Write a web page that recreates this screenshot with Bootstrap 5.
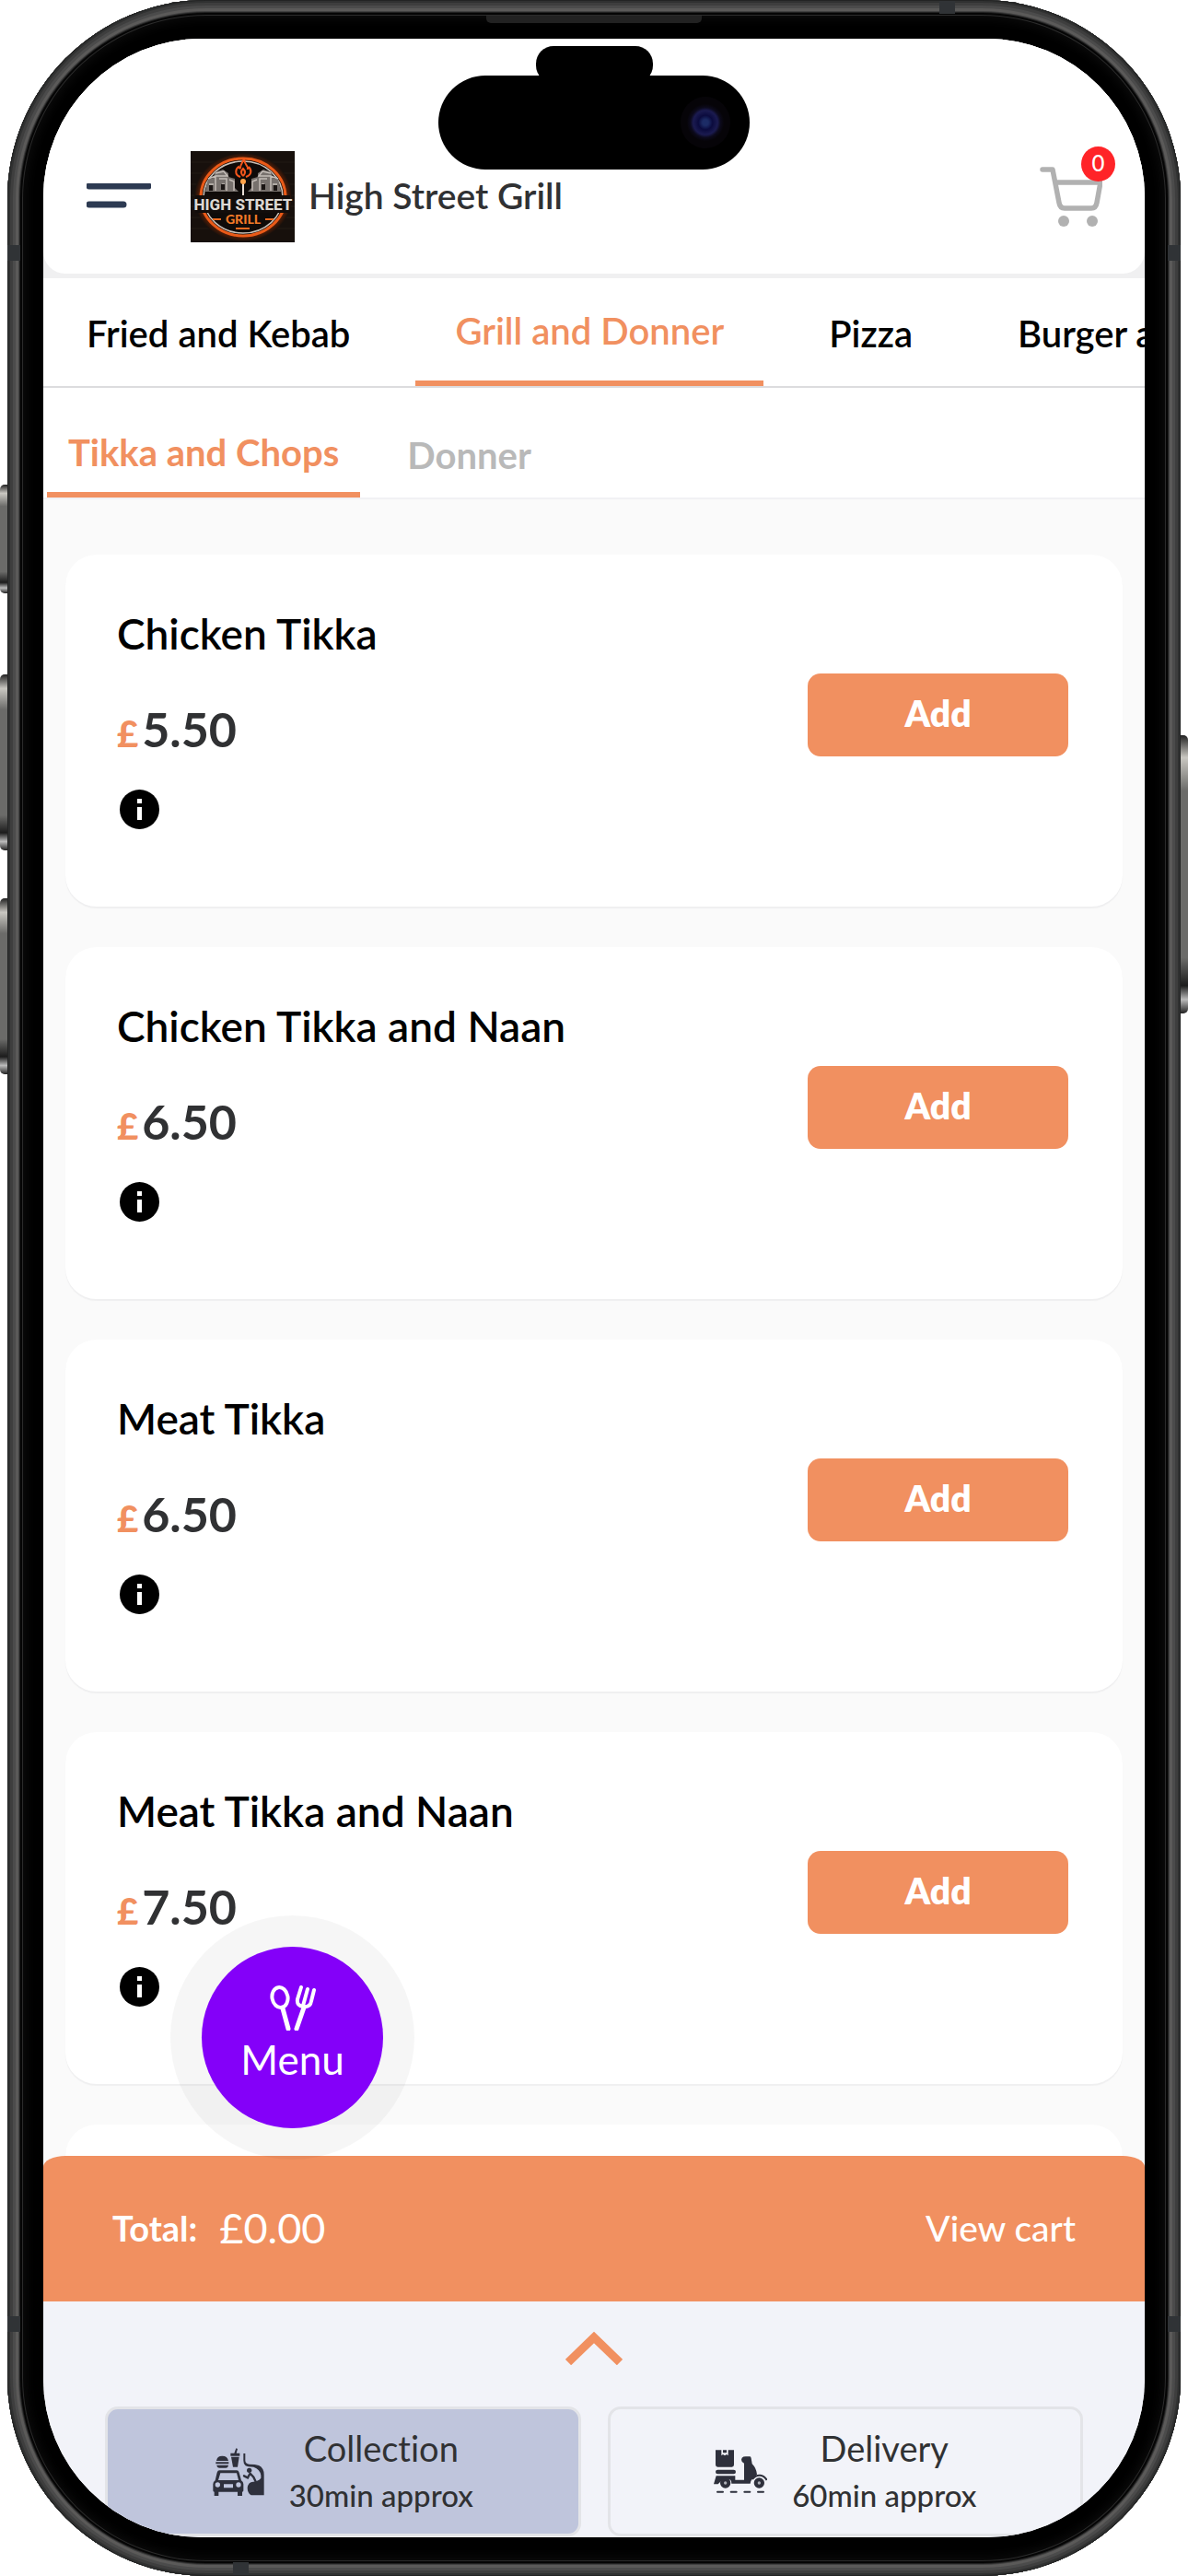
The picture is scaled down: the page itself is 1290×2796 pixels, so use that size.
<!DOCTYPE html>
<html lang="en">
<head>
<meta charset="utf-8">
<meta name="viewport" content="width=device-width, initial-scale=1">
<title>High Street Grill</title>
<link rel="stylesheet" href="https://cdn.jsdelivr.net/npm/bootstrap@5.3.0/dist/css/bootstrap.min.css">
<script src="https://cdn.jsdelivr.net/npm/bootstrap@5.3.0/dist/js/bootstrap.bundle.min.js"></script>
<style>
:root { --brand: #f19060; --ink: #303133; }
body { font-family: Lato, "Open Sans", sans-serif; font-variant-ligatures: none; font-size: 38px; line-height: 52px; color: var(--ink); background: #fff; }
button { color: inherit; font-variant-ligatures: none; }

/* phone body */
.stage { height: 100vh; padding: 0 8px; }
.device {
  height: 100%; padding: 42px 39px; border-radius: 216px; background: #000;
  box-shadow: inset 0 0 0 1px #232424, inset 0 0 0 3px #303131, inset 0 0 0 6px #3e3e3e, inset 0 0 0 9px #4b4b4b,
    inset 0 0 0 12px #5b5a59, inset 0 0 0 13px #414141, inset 0 0 0 14px #202020, inset 0 0 0 16px #050505,
    inset 0 0 0 17px #2b2b2b, inset 0 0 12px 20px #0c0c0c;
}
.screen { height: 100%; border-radius: 172px; background: #fafafa; overflow: hidden; }
.side-key { width: 8px; background: linear-gradient(#222 0, #c9c7c1 8%, #6b6b69 20%, #6b6b69 80%, #1c1c1c 90%, #bbb 95%, #222 100%); }
.key-l { left: 0; border-radius: 5px 0 0 5px; }
.key-r { right: 0; border-radius: 0 5px 5px 0; top: 798px; height: 302px; }
.key-action { top: 526px; height: 118px; }
.key-up { top: 732px; height: 191px; }
.key-down { top: 975px; height: 191px; }
.seam { background: #303336; }
.seam-v { width: 14px; height: 17px; }
.seam-h { width: 17px; height: 14px; }
.seam-hi { top: 266px; }
.seam-lo { bottom: 265px; }
.seam-start { left: 0; }
.seam-end { right: 0; }
.seam-top { top: 1px; right: 245px; }
.seam-bottom { bottom: 1px; left: 245px; }
.speaker { top: 17px; left: 50%; width: 234px; height: 8px; margin-left: -117px; background: #222; border-radius: 0 0 5px 5px; }
.island { z-index: 2; top: 82px; left: 50%; width: 338px; height: 102px; margin-left: -169px; border-radius: 51px; background: #000; }
.island-tab { top: -32px; left: 50%; width: 127px; height: 40px; margin-left: -63px; border-radius: 19px; background: #000; }
.island-lens { right: 21px; top: 23px; width: 54px; height: 56px; border-radius: 50%; background: radial-gradient(circle, #1c2c66 0 8%, #0b0b3e 20%, #1b1b50 34%, #0c0a1c 42%, #060408 52%); }

/* header */
.header-wrap { background: #f0f0f1; padding-bottom: 5px; }
.app-header { background: #fff; padding: 122px 46px 34px 47px; border-radius: 0 0 24px 24px; }
.shop-name { font-size: 39px; font-weight: 600; padding: 0 0 3px 15px; }
.burger { margin-right: 43px; }
.cart-count { top: -22px; right: -14px; width: 37px; height: 38px; border-radius: 50%; background: #ff2428; color: #fff; font-size: 24px; line-height: 36px; font-weight: 500; }

/* category tabs */
.cat-tabs { background: #fff; gap: 28px; font-size: 40px; padding-left: 4px; overflow: hidden; }
.cat-tabs a { display: flex; align-items: center; white-space: nowrap; text-decoration: none; color: #000; }
.cat-tabs a.active { color: var(--brand); border-bottom: 6px solid var(--brand); }
.tabs-main { height: 119px; border-bottom: 2px solid #dcdcde; font-weight: 600; }
.tabs-main a { padding: 3px 43px 0; }
.tabs-sub { height: 121px; border-bottom: 2px solid #f1f1f4; font-weight: 700; }
.tabs-sub a { padding: 26px 23px 0; color: #b9b9b9; }

/* dishes */
.dishes { padding: 60px 24px 0; gap: 44px; overflow: hidden; min-height: 0; }
.dish { background: #fff; border-radius: 34px; padding: 59px 59px 84px 56px; box-shadow: 0 2px 1px #efeff0; }
.dish h2 { font-size: 46px; line-height: 54px; font-weight: 600; color: #000; margin: 0 0 46px; }
.price { font-size: 52px; line-height: 60px; font-weight: 700; margin: 0 0 31px; }
.price span { font-size: 40px; font-weight: 900; color: var(--brand); margin-right: 4px; }
.info-btn { display: block; padding: 0; border: 0; background: none; }
.info-btn svg, .burger svg, .cart svg, .brand-logo, .panel svg { display: block; }
.add-btn { width: 283px; height: 90px; margin-bottom: 10px; padding-bottom: 4px; border: 0; border-radius: 14px; background: var(--brand); color: #fff; font-size: 39px; font-weight: 800; }

/* floating menu button */
.fab { left: 172px; bottom: 444px; width: 197px; height: 197px; padding: 0 0 9px; border: 0; border-radius: 50%; background: #8400f9; color: #fff; font-size: 44px; line-height: 50px; box-shadow: 0 0 0 34px rgba(0,0,0,.035); gap: 6px; }

/* cart bar and order type */
.total-bar { height: 158px; padding: 0 75px 3px 75px; background: var(--brand); color: #fff; border-radius: 24px 24px 0 0 / 12px 12px 0 0; }
.total-bar strong { font-weight: 700; margin-right: 24px; }
.total-bar output { font-size: 45px; }
.total-bar a { color: #fff; text-decoration: none; font-size: 39px; font-weight: 500; }
.panel { background: #f2f3f9; padding: 33px 67px 1px; }
.chevron { display: block; margin: 0 auto 45px; padding: 0; border: 0; background: none; }
.modes { gap: 29px; }
.mode { flex: 1 1 0; height: 141px; gap: 27px; border: 3px solid #e3e4e8; border-radius: 14px; background: transparent; line-height: 51px; }
.mode.active { background: #bfc5dc; }
.mode-time { font-size: 33px; font-weight: 500; }
</style>
</head>
<body>
<div class="stage position-relative">
  <i class="side-key key-l key-action position-absolute"></i>
  <i class="side-key key-l key-up position-absolute"></i>
  <i class="side-key key-l key-down position-absolute"></i>
  <i class="side-key key-r position-absolute"></i>
  <div class="device position-relative">
    <i class="seam seam-v seam-hi seam-start position-absolute"></i>
    <i class="seam seam-v seam-hi seam-end position-absolute"></i>
    <i class="seam seam-v seam-lo seam-start position-absolute"></i>
    <i class="seam seam-v seam-lo seam-end position-absolute"></i>
    <i class="seam seam-h seam-top position-absolute"></i>
    <i class="seam seam-h seam-bottom position-absolute"></i>
    <i class="speaker position-absolute"></i>
    <div class="island position-absolute"><i class="island-tab position-absolute"></i><i class="island-lens position-absolute"></i></div>

    <div class="screen d-flex flex-column position-relative">
      <div class="header-wrap">
        <header class="app-header d-flex align-items-center">
          <button class="burger border-0 bg-transparent p-0" aria-label="Open navigation">
            <svg width="70" height="30"><path d="M3 3H67M3 23H40" stroke="#2d3a52" stroke-width="7" stroke-linecap="round"/></svg>
          </button>
          <svg class="brand-logo" width="113" height="99" viewBox="0 0 113 99" role="img" aria-label="High Street Grill logo">
            <defs><radialGradient id="glow"><stop offset=".72" stop-color="#120c09"/><stop offset=".88" stop-color="#5a1f06"/><stop offset="1" stop-color="#17100c"/></radialGradient></defs>
            <path fill="#17100c" d="M0 0h113v99H0z"/>
            <path stroke="#221a15" stroke-width="1" d="M0 12h113M0 24h113M0 36h113M0 48h113M0 60h113M0 72h113M0 84h113"/>
            <ellipse cx="57" cy="50" rx="53" ry="48" fill="url(#glow)"/>
            <ellipse cx="57" cy="50" rx="46" ry="42" fill="#0f0b09" stroke="#ea5a18" stroke-width="3"/>
            <ellipse cx="57" cy="50" rx="43" ry="39" fill="none" stroke="#c9bfb6" stroke-width="1.5"/>
            <g fill="#77716d"><path d="M16 43l3-13 6-1 1-6 9-3 6 4v4l7 2v10l4 4H14zM98 43l-3-13-6-1-1-6-9-3-6 4v4l-7 2v10l-4 4h36z"/></g>
            <g fill="none" stroke="#c4bdb7" stroke-width="1.5"><path d="M19 30l8-3v16M27 24l9-2 4 5H27M31 30h8v13M42 31l5 2v10M95 30l-8-3v16M87 24l-9-2-4 5h13M83 30h-8v13M72 31l-5 2v10M20 36h5M94 36h-5M34 36h3M80 36h-3"/></g>
            <path d="M20 37h4v6h-4zM90 37h4v6h-4zM33 36h4v6h-4zM77 36h4v6h-4z" fill="#1a1513"/>
            <path d="M57 34v14" stroke="#e8ded5" stroke-width="2"/>
            <circle cx="57" cy="33" r="3" fill="#ffa349"/>
            <path d="M57 27c-3-3-2-6 0-8 2 2 3 5 0 8M54 28c-7-2-5-9-2-11 1 2 2 2 2 1 0-4 3-6 4-10 0 7 5 8 4 11 1 0 2-1 1-2 4 4 3 9-3 11" fill="none" stroke="#f4561c" stroke-width="2"/>
            <path d="M5 48h103v19H5z" fill="#120d0b"/>
            <text x="57" y="64" text-anchor="middle" font-family="Roboto, sans-serif" font-weight="800" font-size="17" fill="#dcd8d3">HIGH STREET</text>
            <text x="57" y="79" text-anchor="middle" font-family="Lato, sans-serif" font-weight="900" font-size="14" fill="#f27a28">GRILL</text>
            <path d="M24 74h9M81 74h9M49 84h15" stroke="#e8691f" stroke-width="2"/>
          </svg>
          <span class="shop-name">High Street Grill</span>
          <button class="cart position-relative ms-auto border-0 bg-transparent p-0" aria-label="Cart">
            <svg width="68" height="65" viewBox="0 0 68 65"><g fill="none" stroke="#b1b1b1" stroke-width="5.5" stroke-linecap="round" stroke-linejoin="round"><path d="M3 3h11l7 36q1 6 6 6h29q5 0 6-6l4-22H17"/></g><circle cx="26" cy="59" r="6" fill="#b1b1b1"/><circle cx="57" cy="59" r="6" fill="#b1b1b1"/></svg>
            <span class="cart-count position-absolute text-center">0</span>
          </button>
        </header>
      </div>

      <nav class="cat-tabs tabs-main d-flex flex-shrink-0" aria-label="Categories">
        <a href="#">Fried and Kebab</a><a href="#" class="active">Grill and Donner</a><a href="#">Pizza</a><a href="#">Burger a</a>
      </nav>
      <nav class="cat-tabs tabs-sub d-flex flex-shrink-0" aria-label="Subcategories">
        <a href="#" class="active">Tikka and Chops</a><a href="#">Donner</a>
      </nav>

      <main class="dishes flex-fill d-flex flex-column">
        <article class="dish d-flex justify-content-between align-items-center flex-shrink-0">
          <div><h2>Chicken Tikka</h2><p class="price"><span>£</span>5.50</p>
            <button class="info-btn" aria-label="About Chicken Tikka"><svg width="46" height="43"><circle cx="24.5" cy="21.5" r="21.5"/><path d="M24.500 19v14M24.500 10v5" stroke="#fff" stroke-width="5"/></svg></button></div>
          <button class="add-btn">Add</button>
        </article>
        <article class="dish d-flex justify-content-between align-items-center flex-shrink-0">
          <div><h2>Chicken Tikka and Naan</h2><p class="price"><span>£</span>6.50</p>
            <button class="info-btn" aria-label="About Chicken Tikka and Naan"><svg width="46" height="43"><circle cx="24.5" cy="21.5" r="21.5"/><path d="M24.500 19v14M24.500 10v5" stroke="#fff" stroke-width="5"/></svg></button></div>
          <button class="add-btn">Add</button>
        </article>
        <article class="dish d-flex justify-content-between align-items-center flex-shrink-0">
          <div><h2>Meat Tikka</h2><p class="price"><span>£</span>6.50</p>
            <button class="info-btn" aria-label="About Meat Tikka"><svg width="46" height="43"><circle cx="24.5" cy="21.5" r="21.5"/><path d="M24.500 19v14M24.500 10v5" stroke="#fff" stroke-width="5"/></svg></button></div>
          <button class="add-btn">Add</button>
        </article>
        <article class="dish d-flex justify-content-between align-items-center flex-shrink-0">
          <div><h2>Meat Tikka and Naan</h2><p class="price"><span>£</span>7.50</p>
            <button class="info-btn" aria-label="About Meat Tikka and Naan"><svg width="46" height="43"><circle cx="24.5" cy="21.5" r="21.5"/><path d="M24.500 19v14M24.500 10v5" stroke="#fff" stroke-width="5"/></svg></button></div>
          <button class="add-btn">Add</button>
        </article>
        <article class="dish flex-shrink-0"></article>
      </main>

      <div class="total-bar d-flex align-items-center flex-shrink-0">
        <strong>Total:</strong><output>£0.00</output><a href="#" class="ms-auto">View cart</a>
      </div>
      <section class="panel flex-shrink-0">
        <button class="chevron" aria-label="Expand"><svg width="62" height="36"><path d="M3 33L31 6l28 27" fill="none" stroke="#f19060" stroke-width="9"/></svg></button>
        <div class="modes d-flex">
          <button class="mode active d-flex align-items-center justify-content-center">
            <svg width="56" height="52" viewBox="0 0 168 156" fill="#2e303c">
              <path d="M12 42q2-16 19-16t20 16zM10 46h42v6H10zM13 56h38q-1 9-9 9H22q-8 0-9-9zM58 17h12l6-16 5 2-4 14h11v9H58zM60 29h26l-5 33H66z"/>
              <path d="M22 73h56q6 0 8 7l7 26q7 4 7 12v21q0 4-4 4v13H81v-13H19v13H5v-13q-4 0-4-4v-21q0-8 7-12l6-26q2-7 8-7zm3 9l-7 23h66l-6-23zM16 112a8 8 0 100 16 8 8 0 000-16zm68 0a8 8 0 100 16 8 8 0 000-16zM36 118v12h30v-12z" fill-rule="evenodd"/>
              <path d="M100 18h6v24q1 10 13 11 20 0 31 4 17 8 17 30v67h-42q-12-7-12-24 2-19 19-20 16-1 25-12V89q-3-20-24-27-20 0-26-4-7-5-7-17z"/>
              <circle cx="119" cy="73" r="8"/><path d="M122 83l11 12 8 17 10 3M121 84l-7 13-12-6" fill="none" stroke="#2e303c" stroke-width="7" stroke-linecap="round"/>
            </svg>
            <span class="d-flex flex-column"><span>Collection</span><span class="mode-time">30min approx</span></span>
          </button>
          <button class="mode d-flex align-items-center justify-content-center">
            <svg width="58" height="48" viewBox="0 0 174 144" fill="#2e303c">
              <path d="M6 1h19v18l5-4 6 4 6-4 5 4V1h19v48q0 7-7 7H13q-7 0-7-7zM30 1h12v9H30zM13 65h52q7 0 7 7t-7 7H13q-7 0-7-7t7-7zM8 85h62v14H56q-17-11-32 3L14 112H0z"/>
              <path d="M92 26q4-4 12-4h14q3 0 4 6l3 18q14 14 16 34l-16 16q-5 5-6 14H58q0-8-3-12h44V44q-9-4-9-12z"/>
              <circle cx="38" cy="108" r="17"/><circle cx="148" cy="108" r="17"/>
              <path d="M126 96q10-14 25-13 15 2 22 16" fill="none" stroke="#2e303c" stroke-width="6"/>
              <circle cx="38" cy="108" r="5" fill="#aeb0b8"/><circle cx="148" cy="108" r="5" fill="#aeb0b8"/>
              <path d="M12 137h18M56 137h18M100 137h18M144 137h18" stroke="#2e303c" stroke-width="6" stroke-linecap="round"/>
            </svg>
            <span class="d-flex flex-column"><span>Delivery</span><span class="mode-time">60min approx</span></span>
          </button>
        </div>
      </section>

      <button class="fab position-absolute d-flex flex-column align-items-center justify-content-center">
        <svg width="50" height="49" viewBox="0 0 50 49" fill="none" stroke="#fff" stroke-linecap="round"><ellipse cx="11" cy="13" rx="8.5" ry="11" stroke-width="4" transform="rotate(-10 11 13)"/><path d="M14 25l6 22M29 47l8-23" stroke-width="5"/><path d="M34 2l-4 13q-1 7 6 8 8 1 9-6l3-12M41 4l-5 18" stroke-width="4"/></svg>
        <span>Menu</span>
      </button>
    </div>
  </div>
</div>
</body>
</html>
